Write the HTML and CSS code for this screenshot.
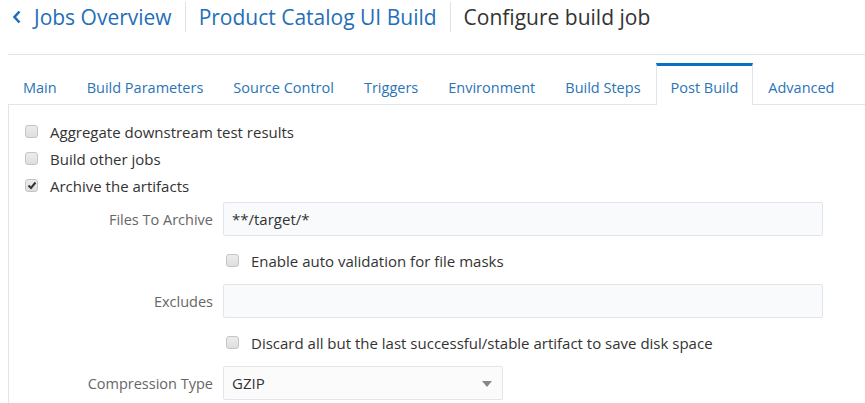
FILE: index.html
```html
<!DOCTYPE html>
<html>
<head>
<meta charset="utf-8">
<link rel="stylesheet" href="styles.css">
</head>
<body>
<div class="page">
  <div class="crumbs">
    <a class="crumb link back"><svg class="chev" width="10" height="14" viewBox="0 0 10 14"><path d="M7.5 1.5 L2.5 7 L7.5 12.5" fill="none" stroke="#1f6fb8" stroke-width="2.6"/></svg>Jobs Overview</a>
    <span class="sep"></span>
    <a class="crumb link">Product Catalog UI Build</a>
    <span class="sep"></span>
    <span class="crumb current">Configure build job</span>
  </div>
  <div class="tabs">
    <span class="tab">Main</span>
    <span class="tab">Build Parameters</span>
    <span class="tab">Source Control</span>
    <span class="tab">Triggers</span>
    <span class="tab">Environment</span>
    <span class="tab">Build Steps</span>
    <span class="tab active">Post Build</span>
    <span class="tab">Advanced</span>
  </div>
  <div class="content">
    <div class="check-row"><span class="cb"></span>Aggregate downstream test results</div>
    <div class="check-row"><span class="cb"></span>Build other jobs</div>
    <div class="check-row"><span class="cb checked"><svg width="10" height="9" viewBox="0 0 10 9"><path d="M1.5 4.5 L4 7 L8.5 1.5" fill="none" stroke="#333" stroke-width="2"/></svg></span>Archive the artifacts</div>
    <div class="form-row first">
      <label class="lbl">Files To Archive</label>
      <div class="input wide">**/target/*</div>
    </div>
    <div class="form-row check-sub">
      <span class="lbl"></span>
      <div class="check-row inner"><span class="cb"></span>Enable auto validation for file masks</div>
    </div>
    <div class="form-row">
      <label class="lbl">Excludes</label>
      <div class="input wide"></div>
    </div>
    <div class="form-row check-sub">
      <span class="lbl"></span>
      <div class="check-row inner"><span class="cb"></span>Discard all but the last successful/stable artifact to save disk space</div>
    </div>
    <div class="form-row sel-row">
      <label class="lbl">Compression Type</label>
      <div class="input select">GZIP<span class="caret"></span></div>
    </div>
  </div>
</div>
</body>
</html>
```
FILE: styles.css
```css
html, body {
  margin: 0;
  padding: 0;
  background: #ffffff;
}
body {
  font-family: "Open Sans", "Noto Sans", "DejaVu Sans", sans-serif;
  font-size: 15px;
  color: #333333;
  overflow: hidden;
}
.page {
  margin-left: 8px;
}
.crumbs {
  display: flex;
  align-items: center;
  height: 34px;
  padding-bottom: 20px;
  border-bottom: 1px solid #dfe5eb;
}
.crumb {
  font-size: 21px;
  line-height: 34px;
  white-space: nowrap;
}
.link {
  color: #1f6fb8;
}
.back {
  display: flex;
  align-items: center;
  padding-left: 4px;
}
.chev {
  margin-right: 12px;
}
.current {
  color: #333333;
}
.sep {
  width: 1px;
  height: 30px;
  background: #dbe2e9;
  margin: 0 13px;
}
.tabs {
  display: flex;
  padding-top: 8px;
  border-bottom: 1px solid #dfe5eb;
}
.tab {
  font-size: 14.5px;
  height: 38px;
  line-height: 44px;
  padding: 0 14px;
  border: 1px solid transparent;
  border-top: 3px solid transparent;
  border-bottom: none;
  color: #2a74b6;
  white-space: nowrap;
}
.tab.active {
  border-color: #dfe5eb;
  border-top-color: #0b6fc6;
  background: #ffffff;
  height: 39px;
  margin-bottom: -1px;
}
.content {
  border-left: 1px solid #dfe5eb;
  padding-top: 13px;
  padding-left: 16px;
  height: 300px;
}
.check-row {
  display: flex;
  align-items: center;
  height: 27px;
  white-space: nowrap;
}
.cb {
  display: inline-flex;
  align-items: center;
  justify-content: center;
  box-sizing: border-box;
  width: 13px;
  height: 13px;
  border: 1px solid #c4c4c4;
  border-radius: 3px;
  background: linear-gradient(#ececec, #dedede);
  margin-right: 12px;
  flex: none;
}
.form-row {
  display: flex;
  align-items: center;
  margin-left: -16px;
}
.form-row.first {
  margin-top: 3px;
}
.form-row.check-sub {
  margin-top: 11px;
}
.form-row.check-sub + .form-row {
  margin-top: 10px;
}
.form-row.sel-row {
  margin-top: 8px;
}
.lbl {
  font-size: 14.5px;
  width: 204px;
  text-align: right;
  color: #666666;
  margin-right: 10px;
  flex: none;
  white-space: nowrap;
}
.check-row.inner {
  padding-left: 3px;
}
.input {
  box-sizing: border-box;
  height: 34px;
  line-height: 32px;
  border: 1px solid #e2e6eb;
  border-radius: 2px;
  background: #f9fafc;
  padding: 0 8px;
  color: #333333;
  position: relative;
}
.input.wide {
  width: 600px;
}
.input.select {
  width: 280px;
  background: #fbfbfc;
}
.caret {
  position: absolute;
  right: 10px;
  top: 14px;
  width: 0;
  height: 0;
  border-left: 5px solid transparent;
  border-right: 5px solid transparent;
  border-top: 6px solid #888888;
}
```
